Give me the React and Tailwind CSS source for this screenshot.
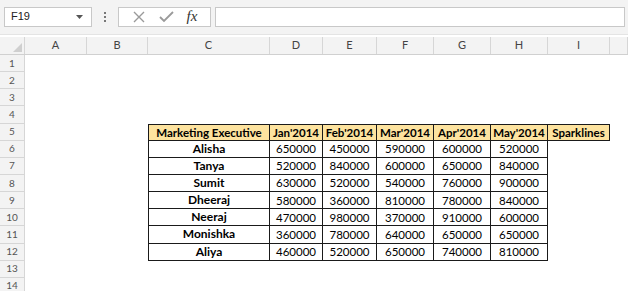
import React from 'react';

const cols = [
  { key: 'A', w: 62 },
  { key: 'B', w: 61 },
  { key: 'C', w: 122 },
  { key: 'D', w: 53 },
  { key: 'E', w: 54 },
  { key: 'F', w: 57 },
  { key: 'G', w: 57 },
  { key: 'H', w: 57 },
  { key: 'I', w: 62 },
  { key: 'J', w: 18 },
];

const header = ['Marketing Executive', "Jan'2014", "Feb'2014", "Mar'2014", "Apr'2014", "May'2014", 'Sparklines'];

const data = [
  ['Alisha', 650000, 450000, 590000, 600000, 520000],
  ['Tanya', 520000, 840000, 600000, 650000, 840000],
  ['Sumit', 630000, 520000, 540000, 760000, 900000],
  ['Dheeraj', 580000, 360000, 810000, 780000, 840000],
  ['Neeraj', 470000, 980000, 370000, 910000, 600000],
  ['Monishka', 360000, 780000, 640000, 650000, 650000],
  ['Aliya', 460000, 520000, 650000, 740000, 810000],
];

function RowHead({ n }) {
  return (
    <div className="w-[25px] shrink-0 h-full flex items-center justify-center bg-[#f3f3f3] border-r border-b border-[#d6d6d6] text-[10px] text-[#555]">
      {n}
    </div>
  );
}

function Cell({ w, children, cls = '' }) {
  return (
    <div style={{ width: w }} className={`shrink-0 h-full flex items-center justify-center ${cls}`}>
      {children}
    </div>
  );
}

function SheetRow({ n, children }) {
  return (
    <div className="flex h-[17.15px]">
      <RowHead n={n} />
      {children}
    </div>
  );
}

export default function App() {
  const rows = [];
  for (let n = 1; n <= 14; n++) {
    let cells;
    if (n === 5) {
      cells = cols.map((c, i) => {
        if (i < 2 || i > 8) return <Cell key={c.key} w={c.w} />;
        return (
          <Cell
            key={c.key}
            w={c.w}
            cls={`bg-[#fde39f] border-t border-b border-r border-[#1a1a1a] font-bold text-[11.5px] text-black ${i === 2 ? 'border-l' : ''}`}
          >
            {header[i - 2]}
          </Cell>
        );
      });
    } else if (n >= 6 && n <= 12) {
      const d = data[n - 6];
      cells = cols.map((c, i) => {
        if (i < 2 || i > 7) return <Cell key={c.key} w={c.w} />;
        return (
          <Cell
            key={c.key}
            w={c.w}
            cls={`border-b border-r border-[#1a1a1a] text-black ${i === 2 ? 'border-l font-bold text-[12px]' : 'text-[11.5px]'}`}
          >
            {d[i - 2]}
          </Cell>
        );
      });
    } else {
      cells = cols.map((c) => <Cell key={c.key} w={c.w} />);
    }
    rows.push(
      <SheetRow key={n} n={n}>
        {cells}
      </SheetRow>
    );
  }

  return (
    <div className="w-[628px] h-[291px] overflow-hidden bg-white font-['Lato','Liberation_Sans',sans-serif]">
      {/* formula bar */}
      <div className="h-[35px] bg-[#f3f3f3] flex items-center pl-[4px] pb-[1px] border-b border-[#e4e4e4]">
        <div className="w-[88px] h-[20px] bg-white border border-[#c8c8c8] flex items-center justify-between pl-[6px] pr-[8px] text-[11px] text-[#222] font-['Liberation_Sans',sans-serif]">
          <span>F19</span>
          <svg width="7" height="4" viewBox="0 0 7 4"><path d="M0 0h7L3.5 4z" fill="#555" /></svg>
        </div>
        <div className="w-[26px] flex flex-col items-center gap-[2px]">
          <span className="w-[2px] h-[2px] bg-[#777]" />
          <span className="w-[2px] h-[2px] bg-[#777]" />
          <span className="w-[2px] h-[2px] bg-[#777]" />
        </div>
        <div className="w-[93px] h-[20px] bg-white border border-[#c8c8c8] flex items-center justify-around px-[6px]">
          <svg width="14" height="14" viewBox="0 0 14 14"><path d="M2 2l10 10M12 2L2 12" stroke="#9a9a9a" strokeWidth="1.4" /></svg>
          <svg width="15" height="13" viewBox="0 0 15 13"><path d="M1 7l4 4L14 2" stroke="#9a9a9a" strokeWidth="1.8" fill="none" /></svg>
          <span className="font-['Liberation_Serif',serif] italic text-[15px] text-[#333] leading-none">fx</span>
        </div>
        <div className="ml-[4px] w-[410px] h-[20px] bg-white border border-[#c8c8c8]" />
      </div>
      <div className="h-[2px]" />
      {/* column headers */}
      <div className="flex h-[18px] bg-[#f3f3f3] border-b border-[#d0d0d0]">
        <div className="w-[25px] shrink-0 h-full border-r border-[#d6d6d6] flex items-end justify-end p-[2px]">
          <svg width="9" height="9" viewBox="0 0 9 9"><path d="M9 0v9H0z" fill="#cfcfcf" /></svg>
        </div>
        {cols.map((c) => (
          <div
            key={c.key}
            style={{ width: c.w }}
            className="shrink-0 h-full border-r border-[#d6d6d6] flex items-center justify-center text-[11px] text-[#444]"
          >
            {c.key === 'J' ? '' : c.key}
          </div>
        ))}
      </div>
      {rows}
    </div>
  );
}
